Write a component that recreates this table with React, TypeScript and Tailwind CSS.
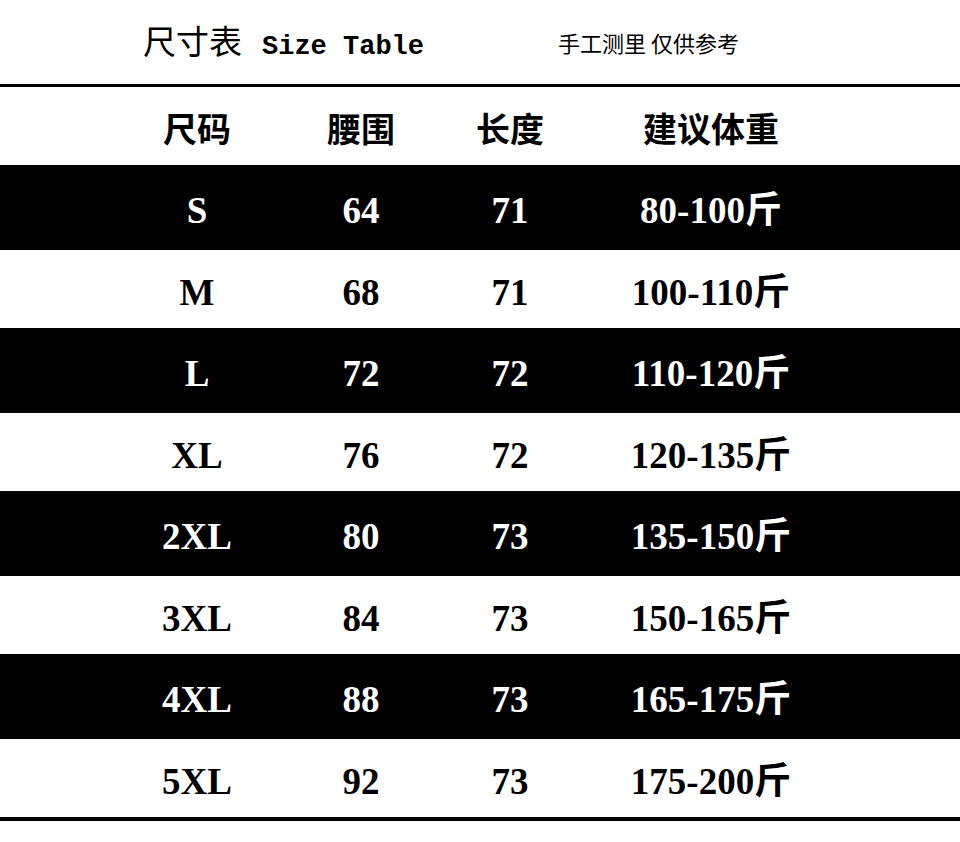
const rows = [
  { size: "S", waist: "64", length: "71", weight: "80-100斤" },
  { size: "M", waist: "68", length: "71", weight: "100-110斤" },
  { size: "L", waist: "72", length: "72", weight: "110-120斤" },
  { size: "XL", waist: "76", length: "72", weight: "120-135斤" },
  { size: "2XL", waist: "80", length: "73", weight: "135-150斤" },
  { size: "3XL", waist: "84", length: "73", weight: "150-165斤" },
  { size: "4XL", waist: "88", length: "73", weight: "165-175斤" },
  { size: "5XL", waist: "92", length: "73", weight: "175-200斤" },
];

const cjk = "font-['Noto_Sans_CJK_SC',sans-serif]";
const num = "font-['Liberation_Serif','Noto_Sans_CJK_SC',serif]";

const App = () => {
  return (
    <div className="w-[960px] h-[842px] bg-white text-black overflow-hidden">
      {/* Title bar */}
      <div className="h-[84px] flex items-center">
        <div className="pl-[143px] w-[558px] flex items-baseline gap-[20px]">
          <span className={`${cjk} text-[33px] leading-none`}>尺寸表</span>
          <span className="font-['Liberation_Mono',monospace] font-bold text-[27px] leading-none">
            Size Table
          </span>
        </div>
        <span className={`${cjk} text-[22px] leading-none`}>手工测里 仅供参考</span>
      </div>

      <div className="border-t-[3px] border-black border-b-[4px]">
        {/* Column headings */}
        <div className="h-[78px] pl-[114px] grid grid-cols-[166px_162px_136px_266px] items-center">
          {["尺码", "腰围", "长度", "建议体重"].map((h) => (
            <div key={h} className={`${cjk} font-bold text-[34px] leading-none text-center pt-[4px]`}>
              {h}
            </div>
          ))}
        </div>

        {rows.map((r, i) => {
          const dark = i % 2 === 0;
          return (
            <div
              key={r.size}
              className={`pl-[114px] grid grid-cols-[166px_162px_136px_266px] items-center ${
                dark ? "h-[85px] bg-black text-white" : "h-[78px] bg-white text-black"
              }`}
            >
              {[r.size, r.waist, r.length, r.weight].map((v, j) => (
                <div key={j} className={`${num} font-bold text-[37px] leading-none text-center pt-[6px]`}>
                  {v}
                </div>
              ))}
            </div>
          );
        })}
      </div>
    </div>
  );
};

export default App;
